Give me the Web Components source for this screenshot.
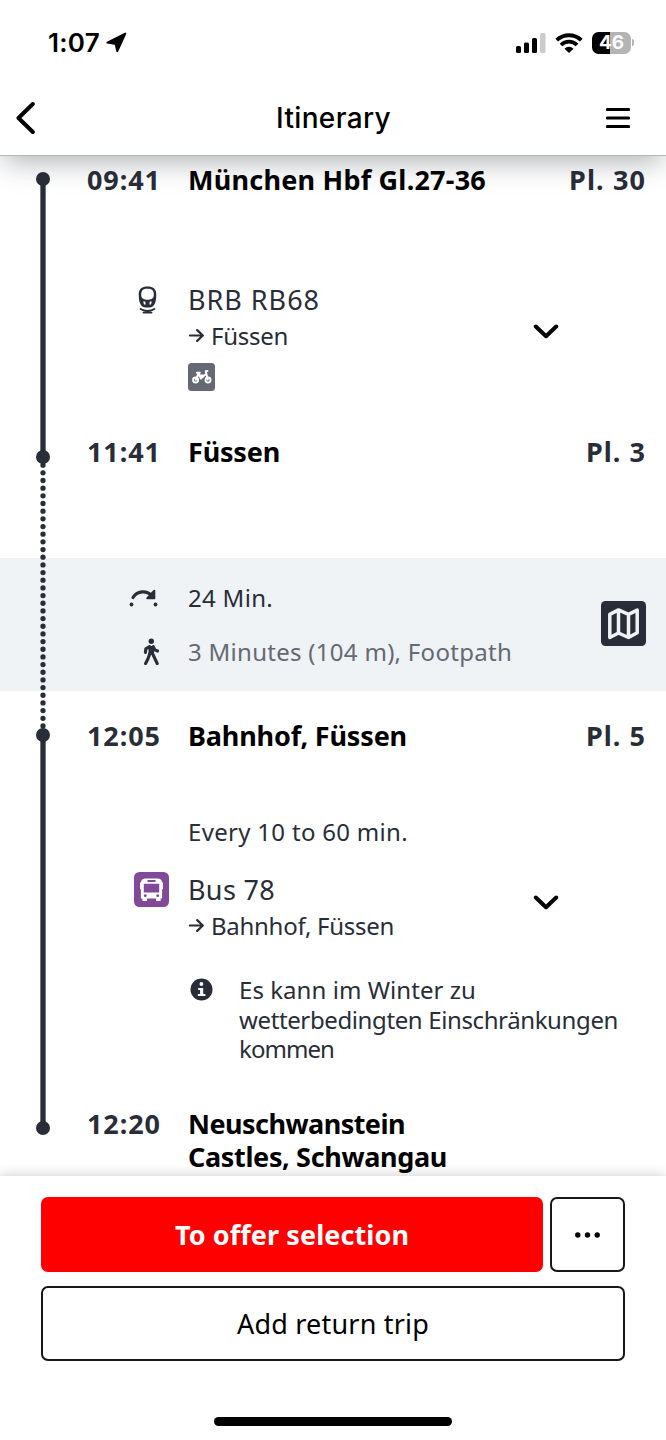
<!DOCTYPE html>
<html lang="en">
<head>
<meta charset="UTF-8">
<meta name="viewport" content="width=device-width, initial-scale=1.0">
<title>Itinerary</title>
<style>
  body {
    margin: 0;
    background: #fff;
    color: #282d37;
    font-family: "Noto Sans", sans-serif;
  }
</style>
</head>
<body>
<trip-screen>
  <status-bar slot="top"><fit-text width="52">1:07</fit-text></status-bar>
  <nav-bar slot="top"><fit-text width="115">Itinerary</fit-text></nav-bar>

  <trip-leg style="--dot: 9px; --next: 14.5px; --height: 272px">
    <trip-stop>
      <fit-text slot="time" width="74">09:41</fit-text>
      <fit-text slot="name" width="298">München Hbf Gl.27-36</fit-text>
      <fit-text slot="platform" width="77">Pl. 30</fit-text>
    </trip-stop>
    <trip-service style="margin-top: 85px">
      <trip-icon slot="icon" name="train" style="margin-right: 3px"></trip-icon>
      <fit-text slot="line" width="132">BRB RB68</fit-text>
      <fit-text slot="direction" width="77">Füssen</fit-text>
      <trip-icon slot="badge" name="bike"></trip-icon>
    </trip-service>
  </trip-leg>

  <trip-leg walk style="--dot: 14.5px; --next: 9px; --height: 284px">
    <trip-stop>
      <fit-text slot="time" width="74">11:41</fit-text>
      <fit-text slot="name" width="92">Füssen</fit-text>
      <fit-text slot="platform" width="60">Pl. 3</fit-text>
    </trip-stop>
    <trip-transfer>
      <fit-text slot="duration" width="85">24 Min.</fit-text>
      <fit-text slot="walk" width="324">3 Minutes (104 m), Footpath</fit-text>
    </trip-transfer>
  </trip-leg>

  <trip-leg style="--dot: 9px; --next: 14px; --height: 388px">
    <trip-stop>
      <fit-text slot="time" width="74">12:05</fit-text>
      <fit-text slot="name" width="219">Bahnhof, Füssen</fit-text>
      <fit-text slot="platform" width="60">Pl. 5</fit-text>
    </trip-stop>
    <trip-frequency><fit-text width="220">Every 10 to 60 min.</fit-text></trip-frequency>
    <trip-service style="margin-top: 22px">
      <trip-icon slot="icon" name="bus" style="margin-right: -9px"></trip-icon>
      <fit-text slot="line" width="87">Bus 78</fit-text>
      <fit-text slot="direction" width="183">Bahnhof, Füssen</fit-text>
    </trip-service>
    <trip-note>
      <fit-text width="237">Es kann im Winter zu</fit-text>
      <fit-text width="379">wetterbedingten Einschränkungen</fit-text>
      <fit-text width="95">kommen</fit-text>
    </trip-note>
  </trip-leg>

  <trip-leg last style="--dot: 14px; --next: 0px; --height: 69px">
    <trip-stop>
      <fit-text slot="time" width="74">12:20</fit-text>
      <fit-text slot="name" width="217">Neuschwanstein</fit-text>
      <fit-text slot="name" width="259">Castles, Schwangau</fit-text>
    </trip-stop>
  </trip-leg>

  <action-bar slot="bottom">
    <action-button primary><fit-text width="234">To offer selection</fit-text></action-button>
    <action-button><trip-icon name="more"></trip-icon></action-button>
    <action-button wide><fit-text width="192">Add return trip</fit-text></action-button>
  </action-bar>
</trip-screen>

<script>
const icons = {
  location: [21, 21, `<path d="M19.300 1.600 11.300 19.200 9.600 12 1.400 10.600z" stroke="#000" stroke-width="2" stroke-linejoin="round"/>`],
  signal: [30, 20, `<rect x="0" y="13" width="5" height="7" rx="1.500"/><rect x="8" y="9.500" width="5" height="10.500" rx="1.500"/><rect x="16" y="5" width="5" height="15" rx="1.500"/><rect x="24" y="0" width="5.500" height="20" rx="1.500" fill="#ccc"/>`],
  wifi: [28, 20, `<g fill="none" stroke="#000" stroke-width="3.800"><path d="M1.700 7.200a17.700 17.700 0 0 1 24.600 0"/><path d="M6 12a11.300 11.300 0 0 1 16 0"/></g><path d="M14 20l-4.500-4.300a6.400 6.400 0 0 1 9 0z"/>`],
  back: [20, 34, `<path d="M17.800 3 3.500 17l14.300 14" fill="none" stroke="#000" stroke-width="4" stroke-linecap="round" stroke-linejoin="round"/>`],
  menu: [24, 22, `<path d="M1.500 2.500h21M1.500 11h21M1.500 19.500h21" stroke="#000" stroke-width="3.200" stroke-linecap="round"/>`],
  chevron: [26, 18, `<path d="M2.800 3.500 13 13.200 23.200 3.500" fill="none" stroke="#000" stroke-width="4" stroke-linecap="round" stroke-linejoin="round"/>`],
  arrow: [16, 14, `<path d="M2 7.500h12M9.200 2.100 14.800 7.500l-5.600 5.400" fill="none" stroke="#282d37" stroke-width="2.200" stroke-linecap="round" stroke-linejoin="round"/>`],
  train: [19, 28, `<path fill-rule="evenodd" d="M9.500.6c5.400 0 8.800 2.300 8.800 8 0 5.800-1 9.500-3 11.300-1.200 1.100-2.900 1.500-5.800 1.500s-4.600-.4-5.800-1.500c-2-1.800-3-5.500-3-11.300C.7 2.900 4.100.6 9.500.6zM5.900 3.200C4.100 3.900 3.200 5.600 3.200 8.600c0 2.500.8 3.700 2.300 4.400 1.900.9 6.100.9 8 0 1.500-.7 2.300-1.900 2.300-4.400 0-3-.9-4.700-2.700-5.400-1.700-.6-5.500-.6-7.200 0zM5.200 15.400l.8 3h1.700l-.5-3zM11.800 15.400l-.5 3H13l.8-3z"/><path d="M2.600 23c3.800 2.600 10 2.600 13.800 0M5.500 26.600h8" fill="none" stroke="#282d37" stroke-width="1.900" stroke-linecap="round"/>`],
  bike: [27, 28, `<rect width="27" height="28" rx="3.500" fill="#646973"/><g fill="none" stroke="#fff" stroke-width="1.900" stroke-linecap="round" stroke-linejoin="round"><circle cx="7.600" cy="17" r="2.500"/><circle cx="20" cy="17" r="2.500"/><path d="M8.800 9.800h3M7.800 16.800l2.700-6.400 2.400 5.200 5-4.500M11 12.500h5M19.800 16.500 17.700 8.200l1.800-.2"/></g><path d="M10.500 12h6l-3.500 4.500z" fill="#fff"/>`],
  transfer: [30, 18, `<path d="M4 8.500C8.500 1.200 18 1.200 23.500 7" fill="none" stroke="#282d37" stroke-width="3.200" stroke-linecap="round"/><path d="M25.300 1.800v7.400h-7z" stroke="#282d37" stroke-width="2" stroke-linejoin="round"/><circle cx="2.500" cy="15.500" r="1.900"/><circle cx="26.500" cy="15.500" r="1.900"/>`],
  walk: [16, 28, `<circle cx="8.300" cy="3.200" r="2.700"/><path d="M5.500 8h5.500v8.500H5.500z"/><path d="M6.500 8.600 2.800 10.800 2.400 14.500M10.300 8.600l1.500 3.200 2.700 1.200M6.800 15.500 5 20.800 2.600 25.500M9.500 15.500l2.400 5.200 2.300 4.800" fill="none" stroke="#282d37" stroke-width="3.100" stroke-linecap="round" stroke-linejoin="round"/>`],
  map: [45, 45, `<rect width="45" height="45" rx="4.500" fill="#282d37"/><path d="m8.800 13.400 8.700-4.500 10 4.500 8.700-4.300v22.700l-8.700 4.700-10-4.500-8.700 4.500zM17.500 9v23M27.500 13.400v23" fill="none" stroke="#eff3f6" stroke-width="3.500" stroke-linejoin="round"/>`],
  bus: [35, 35, `<rect width="35" height="35" rx="5.500" fill="#814997"/><path fill="#fff" fill-rule="evenodd" d="M11.500 6.500h12c3 0 4.300 1.500 4.600 4h.9v6.800h-.9v9.200h-1.500V29h-4.500v-2.500h-9.200V29H8.400v-2.500H6.900v-9.200H6v-6.800h.9c.3-2.500 1.600-4 4.600-4zM13.500 8.100v1.800h8V8.100zM9.800 11.800v8.700h15.400v-8.700z"/><circle cx="11.300" cy="23.700" r="1.400" fill="#814997"/><circle cx="23.700" cy="23.700" r="1.400" fill="#814997"/>`],
  info: [23, 23, `<circle cx="11.500" cy="11.500" r="11"/><circle cx="11.400" cy="6" r="1.900" fill="#fff"/><path d="M8.200 10h5v6h2.200v2H7.800v-2h2.300v-4H8.200z" fill="#fff"/>`],
  more: [26, 6, `<g fill="#000"><circle cx="2.800" cy="3" r="2.700"/><circle cx="12.500" cy="3" r="2.700"/><circle cx="22.200" cy="3" r="2.700"/></g>`],
};

// Small helper: attach an open shadow root with the given markup
function define(name, html, init) {
  const template = document.createElement("template");
  template.innerHTML = html;
  customElements.define(name, class extends HTMLElement {
    constructor() {
      super();
      this.attachShadow({ mode: "open" }).append(template.content.cloneNode(true));
    }
    connectedCallback() {
      if (init) init(this);
    }
  });
}

define("trip-screen", `
  <style>
    :host { display: flex; flex-direction: column; height: 1440px; overflow: hidden; }
    header { position: relative; z-index: 2; height: 156px; background: #fff; border-bottom: 1px solid #b4b7ba; box-sizing: border-box;
      box-shadow: 0 10px 26px -4px rgba(40, 45, 55, .36); }
    main { flex: 1; padding-top: 7px; }
    footer { position: relative; z-index: 2; height: 264px; background: #fff; box-shadow: 0 0 12px rgba(0, 0, 0, .22); }
  </style>
  <header><slot name="top"></slot></header>
  <main><slot></slot></main>
  <footer><slot name="bottom"></slot></footer>
`);

define("status-bar", `
  <style>
    :host { display: flex; align-items: center; height: 85px; padding: 0 32px 0 48px; color: #000; font: 600 26px Inter, sans-serif; box-sizing: border-box; }
    .location { margin-left: 6px; }
    .signal { margin-left: auto; }
    .wifi { margin: 0 9px; }
    .battery { width: 39px; height: 22px; border-radius: 6.500px; color: #fff; font: 700 19px/22px Inter, sans-serif; text-align: center;
      background: linear-gradient(90deg, #000 46%, #b4b4b4 46%); }
    .tip { width: 2px; height: 7px; margin-left: 1px; border-radius: 0 2px 2px 0; background: #b4b4b4; }
  </style>
  <slot></slot>
  <trip-icon class="location" name="location"></trip-icon>
  <trip-icon class="signal" name="signal"></trip-icon>
  <trip-icon class="wifi" name="wifi"></trip-icon>
  <div class="battery">46</div>
  <div class="tip"></div>
`);

define("nav-bar", `
  <style>
    :host { display: flex; align-items: center; justify-content: space-between; height: 66px; padding: 0 36px 0 15px; color: #000; font: 550 28px Inter, sans-serif; box-sizing: border-box; }
    .title { margin-left: 26px; }
  </style>
  <trip-icon name="back"></trip-icon>
  <div class="title"><slot></slot></div>
  <trip-icon name="menu"></trip-icon>
`);

define("trip-leg", `
  <style>
    :host { display: grid; grid-template-columns: 100%; height: var(--height); }
    .rail, .body { grid-area: 1 / 1; }
    .rail { position: relative; z-index: 1; width: 14px; margin: var(--dot) 0 calc(-7px - var(--next)) 36px; }
    svg { position: absolute; width: 100%; height: 100%; overflow: visible; }
    line { stroke: #282d37; stroke-width: 5.300; }
    circle { fill: #282d37; }
    :host([walk]) line { stroke-dasharray: 0 7.670; stroke-linecap: round; }
    :host([last]) line { display: none; }
  </style>
  <div class="rail"><svg><line x1="7" y1="7.500" x2="7" y2="100%"/><circle cx="7" cy="7" r="7"/></svg></div>
  <div class="body"><slot></slot></div>
`);

define("trip-stop", `
  <style>
    :host { display: grid; grid-template-columns: 101px 1fr auto; padding: 0 20px 0 87px; font-size: 27px; font-weight: 700; line-height: 33.300px; }
    .name { display: flex; flex-direction: column; color: #000; }
  </style>
  <div><slot name="time"></slot></div>
  <div class="name"><slot name="name"></slot></div>
  <div><slot name="platform"></slot></div>
`);

define("trip-service", `
  <style>
    :host { display: grid; grid-template-columns: 160px 28px 1fr auto; padding-right: 107px; }
    .icon { display: flex; align-items: center; justify-content: flex-end; height: 37px; }
    .text { grid-column: 3; }
    .line { height: 37px; font-size: 27px; line-height: 37px; }
    .direction { display: flex; align-items: center; gap: 7px; height: 34px; font-size: 24px; line-height: 35px; }
    ::slotted([slot="badge"]) { margin: 11px 0 0; }
    .chevron { align-self: center; margin-bottom: 8px; }
  </style>
  <div class="icon"><slot name="icon"></slot></div>
  <div class="text">
    <div class="line"><slot name="line"></slot></div>
    <div class="direction"><trip-icon name="arrow"></trip-icon><slot name="direction"></slot></div>
    <slot name="badge"></slot>
  </div>
  <trip-icon class="chevron" name="chevron"></trip-icon>
`);

define("trip-transfer", `
  <style>
    :host { display: flex; align-items: center; justify-content: space-between; height: 133px; margin-top: 90px; padding-right: 20px; background: #eff3f6; box-sizing: border-box; }
    .rows { display: grid; grid-template-columns: 159px auto; column-gap: 29px; row-gap: 20px; font-size: 24px; line-height: 34px; }
    .rows trip-icon { align-self: center; justify-self: end; }
    .walk { color: #646973; }
    .map { margin-bottom: 2px; }
  </style>
  <div class="rows">
    <trip-icon name="transfer"></trip-icon>
    <div><slot name="duration"></slot></div>
    <trip-icon name="walk"></trip-icon>
    <div class="walk"><slot name="walk"></slot></div>
  </div>
  <trip-icon class="map" name="map"></trip-icon>
`);

define("trip-frequency", `
  <style>
    :host { display: block; margin-top: 63px; padding-left: 188px; font-size: 24px; line-height: 34px; }
  </style>
  <slot></slot>
`);

define("trip-note", `
  <style>
    :host { display: flex; gap: 26px; margin-top: 33px; padding-left: 190px; font-size: 24px; line-height: 29.300px; }
    trip-icon { margin-top: 3px; }
    .text { display: flex; flex-direction: column; }
  </style>
  <trip-icon name="info"></trip-icon>
  <div class="text"><slot></slot></div>
`);

define("action-bar", `
  <style>
    :host { display: flex; flex-direction: column; align-items: center; height: 264px; padding: 21px 41px 0; box-sizing: border-box; }
    .buttons { display: grid; grid-template-columns: 502px 75px; gap: 14px 7px; }
    .home { width: 238px; height: 9px; margin-top: 56px; border-radius: 5px; background: #000; }
  </style>
  <div class="buttons"><slot></slot></div>
  <div class="home"></div>
`);

define("action-button", `
  <style>
    :host { display: block; }
    :host([wide]) { grid-column: 1 / -1; }
    button { display: flex; align-items: center; justify-content: center; width: 100%; height: 75px; padding: 0; border: 2px solid #15171b; border-radius: 7px;
      background: #fff; color: #000; font: 400 27px "Noto Sans", sans-serif; }
    :host([primary]) button { border-color: #f00; background: #f00; color: #fff; font-weight: 700; }
  </style>
  <button><slot></slot></button>
`);

define("trip-icon", `
  <style>
    :host { display: block; flex: none; }
    svg { display: block; fill: currentColor; }
  </style>
  <svg></svg>
`, (el) => {
  const [width, height, shapes] = icons[el.getAttribute("name")];
  const svg = el.shadowRoot.querySelector("svg");
  svg.setAttribute("width", width);
  svg.setAttribute("height", height);
  svg.setAttribute("viewBox", `0 0 ${width} ${height}`);
  svg.innerHTML = shapes;
});

// Spreads the letter spacing of one line so that it fills `width`.
// Defined last, so the elements around it are already laid out.
define("fit-text", `
  <style>
    :host { display: block; white-space: nowrap; }
    span { display: inline-block; }
  </style>
  <span><slot></slot></span>
`, (el) => {
  const span = el.shadowRoot.querySelector("span");
  const width = Number(el.getAttribute("width"));
  const spacing = (width - span.getBoundingClientRect().width) / el.textContent.length;
  span.style.letterSpacing = `${spacing}px`;
  el.style.width = `${width}px`;
});
</script>
</body>
</html>
